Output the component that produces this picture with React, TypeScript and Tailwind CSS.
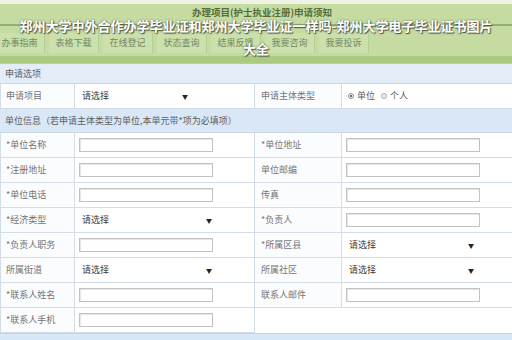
import React from "react";

const font = "font-['Noto_Sans_CJK_SC','Noto_Sans',sans-serif]";

function Label({ text, right }: { text: string; right?: boolean }) {
  return (
    <div
      className={`h-full flex items-center ${right ? "pl-[6px]" : "pl-[5px]"} text-[9px] text-[#747474] border-r border-b border-[#d3dde7] bg-[#fbfcfe]`}
    >
      {text}
    </div>
  );
}

function InputCell() {
  return (
    <div className="h-full flex items-center pl-[4px] border-r border-b border-[#d3dde7] bg-white">
      <div className="w-[134px] h-[14px] border border-[#c2c2c2] bg-white shadow-[inset_1px_1px_1px_#e4e4e4]" />
    </div>
  );
}

function SelectCell({ arrowAt = 131 }: { arrowAt?: number }) {
  return (
    <div className="h-full flex items-center pl-[7px] border-r border-b border-[#d3dde7] bg-white relative">
      <span className="text-[9px] text-[#3a3a3a]">请选择</span>
      <span
        className="absolute top-1/2 -translate-y-1/2 text-[6px] text-[#222]"
        style={{ left: arrowAt }}
      >
        ▼
      </span>
    </div>
  );
}

export default function App() {
  const tabs = ["办事指南", "表格下载", "在线登记", "状态查询", "结果反馈", "我要咨询", "我要投诉"];
  return (
    <div className={`w-[512px] h-[340px] overflow-hidden relative bg-white ${font}`}>
      {/* header */}
      <div className="h-[4px] bg-[#eef3e6]" />
      <div className="h-[59px] bg-[#c5dba1] flex flex-col">
        <div className="h-[16px] flex items-center justify-center pl-[12px] text-[9.5px] font-bold text-[#566b3a]">
          办理项目(护士执业注册)申请须知
        </div>
        <div className="mt-[4px] h-[2px] bg-[#95ad79]" />
        <div className="mt-[7px] h-[20px] flex gap-[4px] -ml-[5px]">
          {tabs.map((t) => (
            <div
              key={t}
              className="w-[50px] h-full flex items-center justify-center text-[9px] text-[#748763] bg-[#cbe0ab] border-r border-[#b6cd96]"
            >
              {t}
            </div>
          ))}
        </div>
        <div className="mt-[3px] h-[7px] bg-[#a9ca7f]" />
      </div>
      <div className="h-[1px] bg-[#b9c6cf]" />

      {/* section 申请选项 */}
      <div className="h-[20px] flex items-center pl-[5px] text-[9px] text-[#5e5e5e] bg-[#e2edf8] border-b border-[#cbd7e3]">
        申请选项
      </div>

      <div className="grid grid-cols-[74px_180px_87px_171px] border-l border-[#d3dde7]">
        <div className="h-[25px]"><Label text="申请项目" /></div>
        <div className="h-[25px]"><SelectCell arrowAt={107} /></div>
        <div className="h-[25px]"><Label text="申请主体类型" right /></div>
        <div className="h-[25px] flex items-center pl-[6px] gap-[3px] text-[9px] text-[#5e5e5e] border-b border-[#d3dde7] bg-white">
          <span className="w-[6px] h-[6px] rounded-full border border-[#888] flex items-center justify-center">
            <span className="w-[2px] h-[2px] rounded-full bg-[#333]" />
          </span>
          <span>单位</span>
          <span className="ml-[3px] w-[6px] h-[6px] rounded-full border border-[#aaa] bg-[#eee]" />
          <span>个人</span>
        </div>
      </div>

      {/* section 单位信息 */}
      <div className="h-[24px] flex items-center pl-[5px] text-[9px] text-[#5e5e5e] bg-[#d9e7f7] border-b border-[#cbd7e3]">
        单位信息（若申请主体类型为单位,本单元带*项为必填项）
      </div>

      <div className="grid grid-cols-[74px_180px_87px_171px] grid-rows-[repeat(8,25px)] border-l border-[#d3dde7]">
        <Label text="*单位名称" />
        <InputCell />
        <Label text="*单位地址" right />
        <InputCell />

        <Label text="*注册地址" />
        <InputCell />
        <Label text="单位邮编" right />
        <InputCell />

        <Label text="*单位电话" />
        <InputCell />
        <Label text="传真" right />
        <InputCell />

        <Label text="*经济类型" />
        <SelectCell />
        <Label text="*负责人" right />
        <InputCell />

        <Label text="*负责人职务" />
        <InputCell />
        <Label text="*所属区县" right />
        <SelectCell arrowAt={126} />

        <Label text="所属街道" />
        <SelectCell />
        <Label text="所属社区" right />
        <SelectCell arrowAt={126} />

        <Label text="*联系人姓名" />
        <InputCell />
        <Label text="联系人邮件" right />
        <InputCell />

        <Label text="*联系人手机" />
        <InputCell />
        <div className="bg-white" />
        <div className="bg-white" />
      </div>
      <div className="h-[10px] bg-[#d8e7f7] border-t border-[#c5d3e0]" />

      {/* overlay title */}
      <div className="absolute left-1/2 -translate-x-1/2 top-[14px] w-[484px] text-center text-[13px] leading-[23px] font-bold text-white [text-shadow:0_0_2px_#55604a,1px_1px_1px_#4a5340]">
        郑州大学中外合作办学毕业证和郑州大学毕业证一样吗-郑州大学电子毕业证书图片大全
      </div>
    </div>
  );
}
